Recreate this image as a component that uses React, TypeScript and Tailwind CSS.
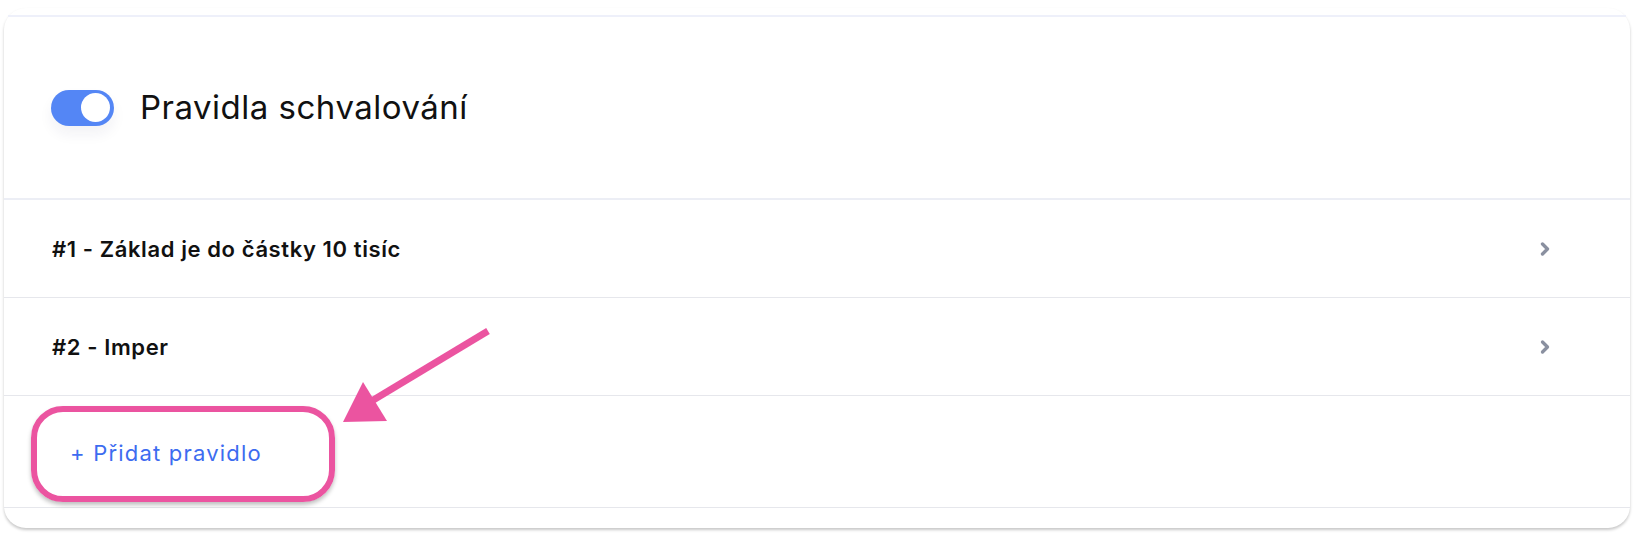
import { ChevronRight } from "lucide-react";

type Rule = {
  id: number;
  name: string;
};

const rules: Rule[] = [
  { id: 1, name: "Základ je do částky 10 tisíc" },
  { id: 2, name: "Imper" },
];

const Toggle = () => (
  <div className="relative h-[36px] w-[63px] shrink-0 rounded-full bg-[#5486f5] shadow-[0_8px_14px_rgba(30,40,80,0.06)]">
    <div className="absolute right-[4px] top-[3.5px] h-[29px] w-[29px] rounded-full bg-white" />
  </div>
);

const App = () => {
  return (
    <div className="relative h-[538px] w-[1633px] bg-white font-['Inter',sans-serif]">
      <div className="ml-[4px] mt-[8px] w-[1626px] rounded-[22px] bg-white pb-[20px] shadow-[0_2px_3px_rgba(0,0,0,0.22)]">
        <div className="mx-[4px] pt-[7px]">
          <div className="h-[2px] bg-[#eef0fa]" />
        </div>

        {/* header */}
        <div className="flex h-[183px] items-center gap-[26px] border-b-2 border-[#eceef5] pl-[47px]">
          <Toggle />
          <h2 className="text-[33px] font-normal tracking-[0.5px] text-[#111]">Pravidla schvalování</h2>
        </div>

        {/* rules */}
        {rules.map((rule) => (
          <div
            key={rule.id}
            className="flex h-[98px] items-center justify-between border-b border-[#e6e7ec] pl-[48px] pr-[75px]"
          >
            <span className="pt-[2px] text-[22px] font-semibold tracking-[0.6px] text-[#111]">
              #{rule.id} - {rule.name}
            </span>
            <ChevronRight className="h-[20px] w-[20px] text-[#8a90a0]" strokeWidth={4} />
          </div>
        ))}

        {/* add */}
        <div className="relative flex h-[112px] items-center border-b border-[#e6e7ec] pl-[66px]">
          <button className="pt-[4px] text-[22px] font-normal tracking-[1.2px] text-[#3d6cf0]">+ Přidat pravidlo</button>
          <div className="pointer-events-none absolute left-[27px] top-[10px] h-[96px] w-[304px] rounded-[32px] border-[6px] border-[#eb54a0] shadow-[0_3px_4px_rgba(0,0,0,0.25)]" />
        </div>
      </div>

      {/* annotation arrow */}
      <svg className="pointer-events-none absolute left-0 top-0" width="1633" height="538">
        <line x1="488" y1="323" x2="370" y2="394" stroke="#eb54a0" strokeWidth="7" />
        <polygon points="343,414 363,374 387,413" fill="#eb54a0" />
      </svg>
    </div>
  );
};

export default App;
